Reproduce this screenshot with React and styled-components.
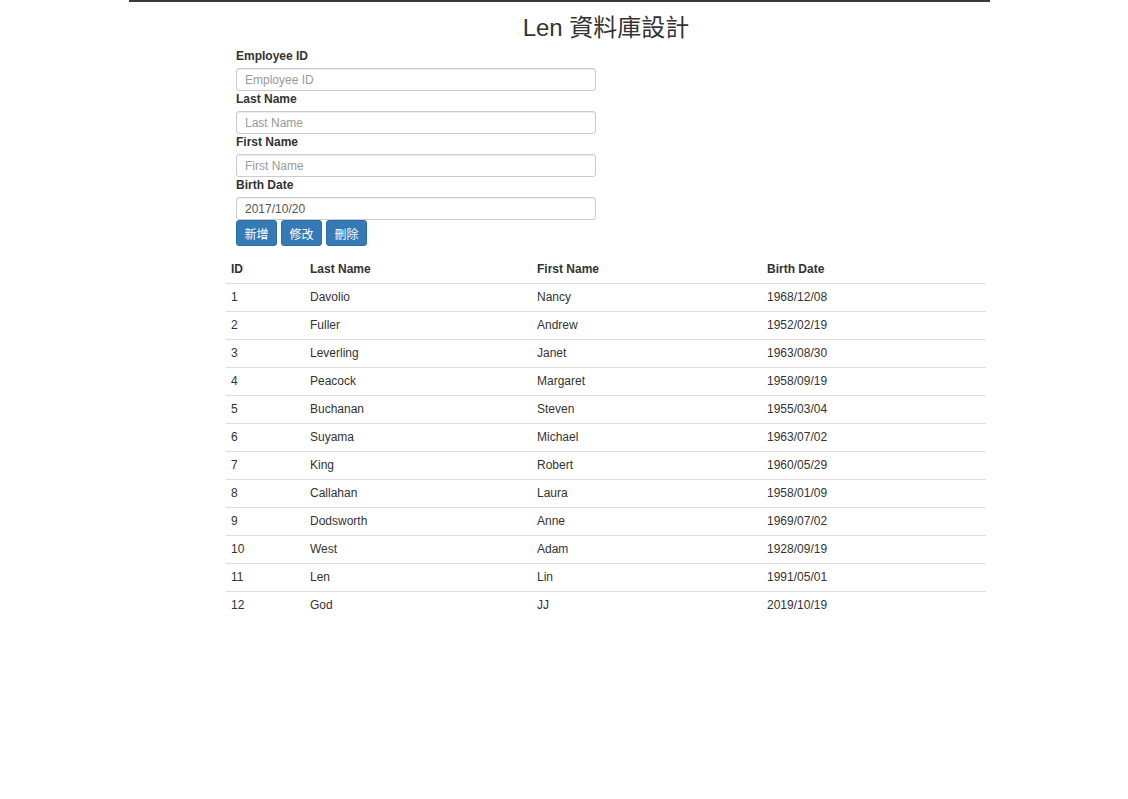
import React from "react";
import styled, { createGlobalStyle } from "styled-components";

const Global = createGlobalStyle`
  html, body { margin: 0; padding: 0; background: #fff; }
  body {
    font-family: "Liberation Sans", Arial, "Noto Sans CJK TC", sans-serif;
    font-size: 12px;
    line-height: 1.42857;
    color: #333;
  }
  * { box-sizing: border-box; }
`;

const Page = styled.div`
  margin-left: 129px;
  width: 861px;
  border-top: 2px solid #3a3a30;
`;

const Content = styled.div`
  margin-left: 97px;
  width: 760px;
`;

const Title = styled.h1`
  margin: 13px 0 7px;
  text-align: center;
  font-size: 24px;
  font-weight: 400;
  line-height: 26px;
  color: #333;
  font-family: "Liberation Sans", Arial, "Noto Sans CJK TC", sans-serif;
`;

const Form = styled.form`
  padding-left: 10px;
  display: flex;
  flex-direction: column;
`;

const Label = styled.label`
  font-weight: bold;
  font-size: 12px;
  line-height: 17px;
  margin-bottom: 3px;
`;

const Input = styled.input`
  width: 360px;
  height: 23px;
  padding: 2px 8px;
  border: 1px solid #ccc;
  border-radius: 3px;
  box-shadow: inset 0 1px 1px rgba(0, 0, 0, 0.075);
  font-family: inherit;
  font-size: 12px;
  color: #555;
  outline: none;
  &::placeholder { color: #999; }
`;

const Buttons = styled.div`
  display: flex;
  gap: 4px;
`;

const Button = styled.button`
  height: 26px;
  padding: 0 7.5px;
  background: #337ab7;
  border: 1px solid #2e6da4;
  border-radius: 3px;
  color: #fff;
  font-family: "Liberation Sans", Arial, "Noto Sans CJK TC", sans-serif;
  font-size: 12px;
  cursor: pointer;
`;

const Table = styled.table`
  margin-top: 10px;
  width: 760px;
  border-collapse: collapse;
  table-layout: fixed;
`;

const Th = styled.th`
  text-align: left;
  font-weight: bold;
  padding: 5px;
  line-height: 17px;
  border-bottom: 1px solid #ddd;
  width: ${(p) => p.$w || "auto"};
`;

const Td = styled.td`
  padding: 5px;
  line-height: 17px;
  border-top: 1px solid #ddd;
`;

const Row = styled.tr`
  &:first-child td { border-top: none; }
`;

const data = [
  [1, "Davolio", "Nancy", "1968/12/08"],
  [2, "Fuller", "Andrew", "1952/02/19"],
  [3, "Leverling", "Janet", "1963/08/30"],
  [4, "Peacock", "Margaret", "1958/09/19"],
  [5, "Buchanan", "Steven", "1955/03/04"],
  [6, "Suyama", "Michael", "1963/07/02"],
  [7, "King", "Robert", "1960/05/29"],
  [8, "Callahan", "Laura", "1958/01/09"],
  [9, "Dodsworth", "Anne", "1969/07/02"],
  [10, "West", "Adam", "1928/09/19"],
  [11, "Len", "Lin", "1991/05/01"],
  [12, "God", "JJ", "2019/10/19"],
];

export default function App() {
  return (
    <>
      <Global />
      <Page>
        <Content>
          <Title>Len 資料庫設計</Title>
          <Form onSubmit={(e) => e.preventDefault()}>
            <Label>Employee ID</Label>
            <Input placeholder="Employee ID" />
            <Label>Last Name</Label>
            <Input placeholder="Last Name" />
            <Label>First Name</Label>
            <Input placeholder="First Name" />
            <Label>Birth Date</Label>
            <Input defaultValue="2017/10/20" />
            <Buttons>
              <Button type="button">新增</Button>
              <Button type="button">修改</Button>
              <Button type="button">刪除</Button>
            </Buttons>
          </Form>
          <Table>
            <thead>
              <tr>
                <Th $w="79px">ID</Th>
                <Th $w="227px">Last Name</Th>
                <Th $w="230px">First Name</Th>
                <Th>Birth Date</Th>
              </tr>
            </thead>
            <tbody>
              {data.map((r) => (
                <Row key={r[0]}>
                  <Td>{r[0]}</Td>
                  <Td>{r[1]}</Td>
                  <Td>{r[2]}</Td>
                  <Td>{r[3]}</Td>
                </Row>
              ))}
            </tbody>
          </Table>
        </Content>
      </Page>
    </>
  );
}
